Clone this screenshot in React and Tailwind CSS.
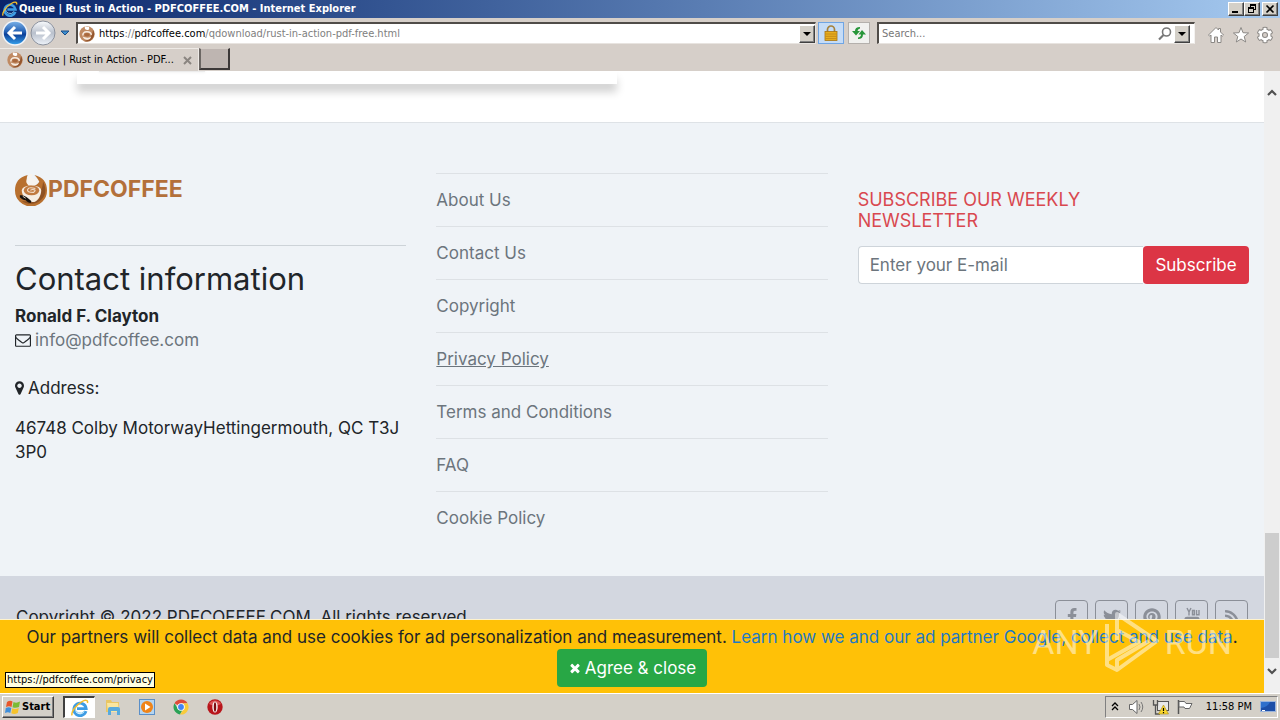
import React from "react";
import { FaCog, FaTwitter, FaPinterest, FaRss } from "react-icons/fa";

const UI = "font-['DejaVu_Sans_Condensed','DejaVu_Sans',sans-serif]";

function Fa({ w = 1792, d, className }) {
  return (
    <svg viewBox={`0 0 ${w} 1792`} className={className} fill="currentColor" aria-hidden="true">
      <path d={d} />
    </svg>
  );
}

const ENVELOPE =
  "M1664 1504v-768q-32 36-69 66-268 206-426 338-51 43-83 67t-86.5 48.5-102.5 24.5h-2q-48 0-102.5-24.5t-86.5-48.5-83-67q-158-132-426-338-37-30-69-66v768q0 13 9.5 22.5t22.5 9.5h1472q13 0 22.5-9.5t9.5-22.5zm0-1051v-24.5l-.5-13-3-12.5-5.5-9-9-7.5-14-2.5h-1472q-13 0-22.5 9.5t-9.5 22.5q0 168 147 284 193 152 401 317 6 5 35 29.5t46 37.5 44.5 31.5 50.5 27.5 43 9h2q20 0 43-9t50.5-27.5 44.5-31.5 46-37.5 35-29.5q208-165 401-317 54-43 100.5-115.5t46.5-131.5zm128-37v1088q0 66-47 113t-113 47h-1472q-66 0-113-47t-47-113v-1088q0-66 47-113t113-47h1472q66 0 113 47t47 113z";
const MARKER =
  "M768 640q0-106-75-181t-181-75-181 75-75 181 75 181 181 75 181-75 75-181zm256 0q0 109-33 179l-364 774q-16 33-47.5 52t-67.5 19-67.5-19-46.5-52l-365-774q-33-70-33-179 0-212 150-362t362-150 362 150 150 362z";
const TIMES =
  "M1490 1322q0 40-28 68l-136 136q-28 28-68 28t-68-28l-294-294-294 294q-28 28-68 28t-68-28l-136-136q-28-28-28-68t28-68l294-294-294-294q-28-28-28-68t28-68l136-136q28-28 68-28t68 28l294 294 294-294q28-28 68-28t68 28l136 136q28 28 28 68t-28 68l-294 294 294 294q28 28 28 68z";
const FACEBOOK =
  "M1343 12v264h-157q-86 0-116 36t-30 108v189h293l-39 296h-254v759h-306v-759h-255v-296h255v-218q0-186 104-288.5t277-102.5q147 0 228 12z";

function IeIcon({ className }) {
  return (
    <svg viewBox="0 0 18 18" className={className} aria-hidden="true">
      <path d="M15 12.2A6.2 6.2 0 1 1 15.2 9.6H6" fill="none" stroke="#3d9ce4" strokeWidth="2.8" />
      <path d="M13.5 11.8A5 5 0 0 1 4.4 8" fill="none" stroke="#8fd4f8" strokeWidth="1" />
      <path d="M1.2 16.4C-.6 13.6 5 6 10.6 2.8 14 .8 17.4.6 16.4 4" fill="none" stroke="#f2bd2c" strokeWidth="1.5" />
    </svg>
  );
}

function CoffeeIcon({ className }) {
  return (
    <svg viewBox="0 0 34 34" className={className} aria-hidden="true">
      <path d="M13 2C4 4 0 10 0 18a16 16 0 0 0 33 0C33 10 29 4 20 2c3 3 4 5 5 7-2 3-5 5-8 4-5-2-6-6-4-11z" fill="#b8702f" />
      <path d="M29 9c4 8 3 16-4 20-6 4-13 3-18 0 11 1 20-3 22-20z" fill="#8d5224" />
      <path d="M15 1h3v2l-2 2 7 2c1 3-1 5-4 6h-5c-2-2-3-4-2-6z" fill="#f7f3ee" />
      <path d="M7 18c0-7 20-7 20 0 0 5-3 10-7 12h-5C11 28 7 23 7 18z" fill="#f5ede3" />
      <ellipse cx="17" cy="18" rx="8" ry="5" fill="#c07a40" />
      <path d="M21 16q-7-2-8 1t6 3q4-3-1-3-2 0-2 1" fill="none" stroke="#f2ddc9" strokeWidth="1.2" />
      <path d="M5 23c4-1 8 2 12 6l-1 2c-3-1-4-2-5-3-2 0-4-1-6-3z" fill="#17120e" />
      <path d="m8 24 3 2" stroke="#d9c9b8" strokeWidth="1" />
    </svg>
  );
}

function Favicon({ className }) {
  return (
    <svg viewBox="0 0 16 16" className={className} aria-hidden="true">
      <circle cx="8" cy="8" r="7.700" fill="#c08a62" />
      <path d="M14 4a7.500 7.500 0 0 1-9 11q8-1 9-11z" fill="#94562e" />
      <path d="M6 .5q-1 3 2 3.500t2-3z" fill="#fff" />
      <path d="M3.800 9.500Q4 5.500 8 5.700t4.400 3.200" fill="none" stroke="#f7ebe0" strokeWidth="1.500" />
      <ellipse cx="8" cy="8.800" rx="2.800" ry="1.700" fill="#a9683d" />
      <path d="M3.500 10.500q2 4 5.500 3.200 2.500-.5 3.200-3-4 2-8.700-.2z" fill="#f7ebe0" />
    </svg>
  );
}

function DropArrow() {
  return (
    <svg viewBox="0 0 8 4" className="h-1 w-2" aria-hidden="true">
      <path d="M0 0h8L4 4z" fill="#000" />
    </svg>
  );
}

const RAISED =
  "border border-t-white border-l-white border-r-[#404040] border-b-[#404040] bg-[#d4d0c8] shadow-[inset_-1px_-1px_0_#808080]";

function TitleBar() {
  return (
    <header className="flex h-[18px] shrink-0 items-center bg-linear-to-r from-[#0a246a] to-[#a6caf0] pr-[2px] pl-[2px]">
      <IeIcon className="size-4" />
      <h1 className="ml-px flex-1 truncate text-[11px] leading-4 font-bold text-white">
        Queue | Rust in Action - PDFCOFFEE.COM - Internet Explorer
      </h1>
      <button aria-label="Minimize" className={`flex h-[14px] w-4 items-center justify-center ${RAISED}`}>
        <svg viewBox="0 0 10 10" className="size-[10px]"><path d="M1 7h6v2H1z" /></svg>
      </button>
      <button aria-label="Restore" className={`flex h-[14px] w-4 items-center justify-center ${RAISED}`}>
        <svg viewBox="0 0 10 10" className="size-[10px]"><path d="M3 0h6v6H7V5h1V2H4v1H3zM1 3h6v6H1zm1 2v3h4V5z" fillRule="evenodd" /></svg>
      </button>
      <button aria-label="Close" className={`ml-[2px] flex h-[14px] w-4 items-center justify-center ${RAISED}`}>
        <svg viewBox="0 0 10 10" className="size-[10px]"><path d="m1.500 1.500 7 7m0-7-7 7" stroke="#000" strokeWidth="1.700" /></svg>
      </button>
    </header>
  );
}

function NavBar() {
  return (
    <nav className="flex h-[30px] shrink-0 items-center bg-[#d6cfc9] pr-[7px] pl-[2px]">
      <button aria-label="Back" className="size-[26px]">
        <svg viewBox="0 0 26 26">
          <defs>
            <linearGradient id="back" x2="0" y2="1">
              <stop stopColor="#7db4ea" /><stop offset=".45" stopColor="#2460b4" /><stop offset=".55" stopColor="#0c3f98" /><stop offset="1" stopColor="#38a4ee" />
            </linearGradient>
          </defs>
          <circle cx="13" cy="13" r="12" fill="url(#back)" stroke="#f2f4f8" strokeWidth="1.500" />
          <path d="M20 13H7m6-6-6 6 6 6" fill="none" stroke="#fff" strokeWidth="3" />
        </svg>
      </button>
      <button aria-label="Forward" className="ml-[2px] size-[26px]">
        <svg viewBox="0 0 26 26">
          <defs>
            <linearGradient id="fwd" x2="0" y2="1">
              <stop stopColor="#fafcfe" /><stop offset=".5" stopColor="#b9c0cc" /><stop offset="1" stopColor="#eef3fa" />
            </linearGradient>
          </defs>
          <circle cx="13" cy="13" r="12" fill="url(#fwd)" stroke="#8c929e" />
          <path d="M6 13h13m-6-6 6 6-6 6" fill="none" stroke="#fff" strokeWidth="3" />
        </svg>
      </button>
      <button aria-label="Recent pages" className="ml-[4px]">
        <svg viewBox="0 0 10 6" className="h-[6px] w-[10px]"><path d="M1 1h8L5 5z" fill="#3d8fd0" stroke="#1b4d86" /></svg>
      </button>
      <div className="ml-[6px] flex h-[22px] flex-1 items-center border border-t-2 border-l-2 border-t-[#504c48] border-l-[#504c48] border-r-[#e8e4e0] border-b-[#e8e4e0] bg-white">
        <Favicon className="ml-px size-4 shrink-0" />
        <div className="ml-1 flex-1 truncate pt-[2px] text-[11px] text-[#808080]">
          <span className="text-black">https</span>://<span className="text-black">pdfcoffee.com</span>/qdownload/rust-in-action-pdf-free.html
        </div>
        <button aria-label="Show address history" className={`flex h-[18px] w-4 items-center justify-center ${RAISED}`}>
          <DropArrow />
        </button>
      </div>
      <button aria-label="Security report" className="ml-[2px] flex h-[22px] w-[26px] items-center justify-center border border-[#6fa5e4] bg-[#c5dcf7]">
        <svg viewBox="0 0 14 16" className="h-4 w-[14px]">
          <path d="M3.500 7V4.500a3.500 3.500 0 0 1 7 0V7" fill="none" stroke="#a5813c" strokeWidth="1.700" />
          <rect x="1" y="6.500" width="12" height="9" fill="#e9ae1d" stroke="#a77413" strokeWidth=".8" />
          <path d="M1.500 9h11m-11 2.300h11m-11 2.300h11" stroke="#bb8319" strokeWidth=".8" />
        </svg>
      </button>
      <button aria-label="Refresh" className="ml-1 flex h-[22px] w-[22px] items-center justify-center border border-[#b4b0ac] bg-[#f1f1ef]">
        <svg viewBox="0 0 16 14" className="h-[14px] w-4" fill="#28963a">
          <path d="M9 1Q4 1 4 5H1l4 4.500L9 5H6.500Q6.500 3 9 2.500z" />
          <path d="M7 13q5 0 5-4.500h3L11 4 7.500 8.500H10q0 2.500-3 3z" />
        </svg>
      </button>
      <div className="ml-[7px] flex h-[22px] w-[318px] items-center border border-t-2 border-l-2 border-t-[#504c48] border-l-[#504c48] border-r-[#f4f2f0] border-b-[#e8e4e0] bg-white pr-1">
        <input aria-label="Search" placeholder="Search..." className="min-w-0 flex-1 pt-[2px] pl-[3px] text-[11px] placeholder:text-[#777]" />
        <svg viewBox="0 0 14 14" className="size-[14px] shrink-0" fill="none" stroke="#777"><circle cx="8.500" cy="5" r="4" strokeWidth="1.600" /><path d="M5.500 8 1 12.500" strokeWidth="2.200" /></svg>
        <button aria-label="Search options" className={`ml-[2px] flex h-[18px] w-4 shrink-0 items-center justify-center ${RAISED}`}>
          <DropArrow />
        </button>
      </div>
      <div className="ml-[12px] flex items-center gap-[7px] pt-1">
        <button aria-label="Home">
          <svg viewBox="0 0 18 18" className="size-[18px]" fill="#fff" stroke="#8b8885"><path d="M9 1.500 1.500 9l1.200 1.200L4 9v7.500h3.500V11h3v5.500H14V9l1.300 1.200L16.500 9l-3-3V2.500h-2V4z" /></svg>
        </button>
        <button aria-label="Favorites">
          <svg viewBox="0 0 18 18" className="size-[18px]" fill="#fff" stroke="#8b8885"><path d="m9 1.500 2 5.200 5.600.3-4.400 3.500 1.500 5.500L9 13l-4.700 3 1.500-5.500L1.400 7l5.600-.3z" /></svg>
        </button>
        <button aria-label="Tools">
          <FaCog className="size-4 overflow-visible fill-white stroke-[#8b8885] stroke-[34px]" />
        </button>
      </div>
    </nav>
  );
}

function TabBar() {
  return (
    <div className="flex h-[23px] shrink-0 bg-[#d6cfc9]">
      <div className="flex w-[199px] items-center border-t border-r border-t-[#eeeae6] border-r-[#eeeae6] pl-[7px]">
        <Favicon className="size-4 shrink-0" />
        <span className="ml-1 flex-1 pt-px text-[11px] whitespace-nowrap text-black">Queue | Rust in Action - PDF...</span>
        <button aria-label="Close tab" className="mr-[6px]">
          <svg viewBox="0 0 9 9" className="size-[9px]"><path d="m1 1 7 7m0-7-7 7" stroke="#8a8580" strokeWidth="2" /></svg>
        </button>
      </div>
      <button aria-label="New tab" className="h-[22px] w-[31px] border-t border-r-2 border-b-2 border-l-2 border-t-[#d6cfc9] border-r-[#3c3838] border-b-[#3c3838] border-l-[#6b6663] bg-[#beb5b1]" />
    </div>
  );
}

const LINKS = ["About Us", "Contact Us", "Copyright", "Privacy Policy", "Terms and Conditions", "FAQ", "Cookie Policy"];

function Footer() {
  return (
    <footer className="shrink-0">
      <div className="grid grid-cols-3 border-t border-[#dee2e6] bg-[#eff3f7] pt-[50px] pb-8">
        <section className="px-[15px]">
          <div className="flex h-8 items-center">
            <CoffeeIcon className="size-[33px]" />
            <span className="text-[23px] leading-8 font-bold text-[#b3703a]">PDFCOFFEE</span>
          </div>
          <hr className="mt-10 mb-4 border-[#cdd3d8]" />
          <h2 className="mb-2 text-[31px] leading-[34px]">Contact information</h2>
          <p className="font-bold">Ronald F. Clayton</p>
          <p className="mb-6 flex items-center gap-1">
            <Fa d={ENVELOPE} className="size-4" />
            <a href="#mail" className="text-[#6c757d]">info@pdfcoffee.com</a>
          </p>
          <p className="mb-4 flex items-center gap-1">
            <Fa w={1024} d={MARKER} className="h-4 w-[9px]" />
            Address:
          </p>
          <p>46748 Colby MotorwayHettingermouth, QC T3J 3P0</p>
        </section>
        <ul className="px-[15px]">
          {LINKS.map((l) => (
            <li key={l} className="border-t border-[#dde1e5] py-[14px]">
              <a href="#page" className={l === "Privacy Policy" ? "text-[#6c757d] underline" : "text-[#6c757d]"}>{l}</a>
            </li>
          ))}
        </ul>
        <section className="px-[15px] pt-4">
          <h2 className="mb-[15px] max-w-[260px] text-[18px] leading-[21px] text-[#d9484f]">SUBSCRIBE OUR WEEKLY NEWSLETTER</h2>
          <form className="flex" onSubmit={(e) => e.preventDefault()}>
            <input type="email" aria-label="E-mail" placeholder="Enter your E-mail" className="h-[38px] min-w-0 flex-1 rounded-l border border-r-0 border-[#ced4da] bg-white px-[11px] placeholder:text-[#6c757d]" />
            <button className="h-[38px] w-[106px] rounded bg-[#dc3545] text-white">Subscribe</button>
          </form>
        </section>
      </div>
      <div className="flex justify-between bg-[#d3d7e0] px-4 pt-6 pb-4">
        <p className="pt-[5px]">Copyright © 2022 PDFCOFFEE.COM. All rights reserved.</p>
        <div className="flex gap-[7px] text-[#8b8f98]">
          <Social label="Facebook"><Fa d={FACEBOOK} className="size-[18px]" /></Social>
          <Social label="Twitter"><FaTwitter className="size-[18px]" /></Social>
          <Social label="Pinterest"><FaPinterest className="size-[18px]" /></Social>
          <Social label="YouTube">
            <svg viewBox="0 0 16 20" className="h-5 w-4" fill="none" stroke="currentColor" strokeWidth="1.400">
              <path d="m3 1 2 4 2-4M5 5v3.500M8.500 3.500h1.800v4.300H8.500zM12.500 3v4.800H15V3" />
              <rect x="1" y="10.500" width="14" height="8" rx="2" fill="currentColor" />
            </svg>
          </Social>
          <Social label="RSS"><FaRss className="size-4" /></Social>
        </div>
      </div>
    </footer>
  );
}

function Social({ label, children }) {
  return (
    <a href="#social" aria-label={label} className="flex size-[33px] items-center justify-center rounded border border-[#8b8f98]">
      {children}
    </a>
  );
}

function Watermark() {
  return (
    <div className="pointer-events-none absolute right-[32px] bottom-[18px] flex items-center gap-1 font-['Roboto',sans-serif] text-[34px] leading-[66px] text-white/50" aria-hidden="true">
      <span>ANY</span>
      <svg viewBox="0 0 58 64" className="h-16 w-[58px]" fill="none" stroke="currentColor" strokeWidth="4" strokeLinejoin="round">
        <path d="M14 30V4L54 31L14 60L4 55V14M14 30V20L36 32L4 50M14 60V50L46 31" />
      </svg>
      <span>RUN</span>
    </div>
  );
}

function CookieBanner() {
  return (
    <aside className="shrink-0 border-t border-[#fff3cd] bg-[#ffc107] pt-[5px] pb-[6px] text-center">
      <p className="whitespace-nowrap">
        Our partners will collect data and use cookies for ad personalization and measurement.{" "}
        <a href="#learn" className="text-[#1f79c4]">Learn how we and our ad partner Google, collect and use data</a>.
      </p>
      <button className="inline-flex h-[38px] w-[150px] items-center justify-center gap-[3px] rounded bg-[#28a745] text-white">
        <Fa d={TIMES} className="size-[14px]" />
        Agree &amp; close
      </button>
    </aside>
  );
}

function Scrollbar() {
  return (
    <div className="flex w-4 shrink-0 flex-col items-center bg-[#f0f0f0] pt-[18px] pb-[18px]">
      <svg viewBox="0 0 10 7" className="h-[7px] w-[10px]" fill="none" stroke="#505050" strokeWidth="2.200"><path d="m1 6 4-4 4 4" /></svg>
      <div className="flex-1" />
      <div className="h-[125px] w-[14px] bg-[#cdcdcd]" />
      <svg viewBox="0 0 10 7" className="mt-[10px] h-[7px] w-[10px]" fill="none" stroke="#505050" strokeWidth="2.200"><path d="m1 1 4 4 4-4" /></svg>
    </div>
  );
}

function Taskbar() {
  return (
    <div className="flex h-[27px] shrink-0 items-center border-t border-white bg-[#d4d0c8] px-[2px]">
      <button className={`flex h-[22px] w-[52px] items-center gap-px pl-[2px] text-[11px] font-bold text-black ${RAISED}`}>
        <svg viewBox="0 0 16 16" className="size-4 shrink-0">
          <path d="M2 3q3-2 5.500-.5L6.500 8Q4 6.500 1 8z" fill="#e8562a" />
          <path d="M8.500 3q3 1.500 6.500-.5L14 8q-3 1.500-6.500.3z" fill="#7bbb35" />
          <path d="M.8 9q3-1.500 5.500 0l-1 5Q3 12.500 0 14z" fill="#3f8fdb" />
          <path d="M7.300 9.300q3 1.300 6.500-.3l-1 5q-3.500 1.800-6.500.3z" fill="#f6c32c" />
        </svg>
        Start
      </button>
      <button aria-label="Internet Explorer" className="ml-[9px] flex h-[22px] w-8 items-center justify-center border border-t-2 border-l-2 border-t-[#404040] border-l-[#404040] border-r-white border-b-white bg-white">
        <IeIcon className="size-[18px]" />
      </button>
      <div className="ml-[9px] flex flex-1 items-center gap-4">
        <button aria-label="Explorer">
          <svg viewBox="0 0 18 18" className="size-[18px]">
            <path d="M2 2h5l1 2h7v10H2z" fill="#e9c664" /><path d="M3 5h11l1 9H4z" fill="#f9e6a0" />
            <path d="M4 17v-6q0-2 2-2h8q2 0 2 2v6h-3v-4H7v4z" fill="#58aadd" />
          </svg>
        </button>
        <button aria-label="Media Player">
          <svg viewBox="0 0 18 18" className="size-[18px]">
            <rect x="1.500" y="1.500" width="15" height="15" fill="#b5d5f0" stroke="#5a8fc8" />
            <circle cx="9" cy="9" r="6" fill="#ef8418" /><path d="M7 5.500 12.500 9 7 12.500z" fill="#fff" />
          </svg>
        </button>
        <button aria-label="Chrome">
          <svg viewBox="0 0 18 18" className="size-[18px]">
            <path d="M9 9 2.500 5.200A7.500 7.500 0 0 1 15.500 5.200L9 5.500z" fill="#dd4b39" />
            <path d="M2.500 5.200A7.500 7.500 0 0 0 8 16.400L11 11 6 11z" fill="#2aa256" />
            <path d="M15.500 5.200A7.500 7.500 0 0 1 8 16.400L12 10.500 10 5.500z" fill="#f8cb3a" />
            <circle cx="9" cy="9" r="3.800" fill="#fff" /><circle cx="9" cy="9" r="2.900" fill="#4285f4" />
          </svg>
        </button>
        <button aria-label="Opera">
          <svg viewBox="0 0 18 18" className="size-[18px]">
            <circle cx="9" cy="9" r="7.700" fill="#b8151b" /><path d="M3 6a7 7 0 0 1 12 0q-6 3-12 0z" fill="#dc5657" />
            <ellipse cx="9" cy="9" rx="2.700" ry="5.500" fill="#f7f0ef" /><ellipse cx="9" cy="9" rx="1.200" ry="4.700" fill="#7d0c10" />
          </svg>
        </button>
      </div>
      <div className="flex h-[22px] items-center border border-t-[#808080] border-l-[#808080] border-r-white border-b-white pr-px pl-[5px]">
        <svg viewBox="0 0 8 10" className="h-[10px] w-2" fill="none" stroke="#000" strokeWidth="1.300"><path d="m1 4 3-3 3 3M1 8l3-3 3 3" /></svg>
        <svg viewBox="0 0 18 16" className="ml-[9px] h-4 w-[18px]"><path d="M1.500 5.500h3L9 1.500v13l-4.500-4h-3z" fill="#fff" stroke="#666" /><path d="M11 5q2 3 0 6m2-8q3.500 5 0 10" fill="none" stroke="#777" /></svg>
        <svg viewBox="0 0 18 16" className="ml-[6px] h-4 w-[18px]">
          <rect x="5.500" y="2.500" width="11" height="9" fill="#e8e8e8" stroke="#555" /><path d="M1.500 1v5h4V1M3.500 6v9H8" fill="none" stroke="#555" strokeWidth="1.300" />
          <path d="m11.500 6 5 9h-10z" fill="#f9d62d" stroke="#a98c16" strokeWidth=".6" /><path d="M11.500 9v3m0 1v1.200" stroke="#000" strokeWidth="1.200" />
        </svg>
        <svg viewBox="0 0 18 16" className="ml-[6px] h-4 w-[18px]"><path d="M2.500 1v14" stroke="#555" strokeWidth="1.500" /><path d="M3 2.500h5.500l1.500 2h6l-2.500 5H9l-1-1.500H3z" fill="#fff" stroke="#666" /></svg>
        <time className="ml-[12px] text-[11px] whitespace-nowrap text-black">11:58 PM</time>
        <svg viewBox="0 0 16 14" className="ml-[8px] h-[14px] w-4"><rect x=".5" y="1.500" width="15" height="10" fill="#2f70cc" stroke="#9ab4dc" /><path d="M1 8q7-1 9-6h5v9H1z" fill="#1d4fa8" /><path d="M2 10.500h3" stroke="#fff" /></svg>
      </div>
    </div>
  );
}

export default function App() {
  return (
    <div className={`flex h-screen flex-col overflow-hidden bg-white ${UI}`}>
      <TitleBar />
      <NavBar />
      <TabBar />
      <div className="flex min-h-0 flex-1">
        <div className="relative flex min-w-0 flex-1 flex-col font-['Inter',sans-serif] text-[17px] leading-6 text-[#212529]">
          <main className="flex min-h-0 flex-1 flex-col overflow-hidden">
            <div className="h-[51px] shrink-0 px-[77px]">
              <div className="h-[13px] w-[540px] bg-white shadow-[0_8px_8px_rgba(0,0,0,0.18)]">
                <div className="ml-[22px] h-px w-[106px] bg-[#ececec] shadow-[0_0_3px_#ddd]" />
              </div>
            </div>
            <Footer />
          </main>
          <CookieBanner />
          <Watermark />
          <div className={`absolute bottom-[5px] left-[5px] border border-black bg-[#ffffe1] px-px text-[11px] leading-[14px] text-black ${UI}`}>
            https://pdfcoffee.com/privacy
          </div>
        </div>
        <Scrollbar />
      </div>
      <Taskbar />
    </div>
  );
}
